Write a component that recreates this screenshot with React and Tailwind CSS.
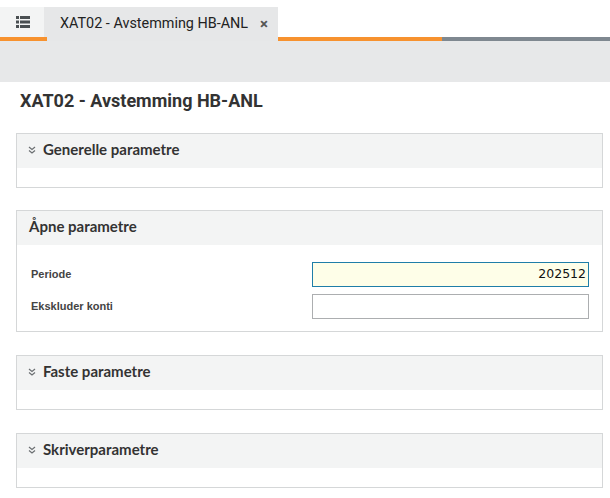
import React from "react";

function Chevrons() {
  return (
    <svg width="8" height="8" viewBox="0 0 8 8" className="shrink-0" fill="none" stroke="#6b6f72" strokeWidth="1.2">
      <path d="M1 1 L4 3.5 L7 1" />
      <path d="M1 4.5 L4 7 L7 4.5" />
    </svg>
  );
}

function Section({ title, chevron = true, children, bodyClass = "h-[19px]", className = "" }) {
  return (
    <div className={"ml-4 mr-[7px] border border-[#d5d7d8] bg-white " + className}>
      <div className="flex h-[34px] items-center gap-[7px] bg-[#f3f4f4] pb-[3px] pl-[11px] text-[15px] font-bold text-[#333]" style={{ fontFamily: "Lato, sans-serif" }}>
        {chevron && <Chevrons />}
        <span className={chevron ? "" : "pl-[1px]"}>{title}</span>
      </div>
      <div className={bodyClass}>{children}</div>
    </div>
  );
}

export default function App() {
  return (
    <div className="h-[498px] w-[610px] overflow-hidden bg-white" style={{ fontFamily: "Roboto, sans-serif" }}>
      <div className="h-[7px]" />
      <div className="flex h-[34px]">
        <div className="flex w-[47px] flex-col">
          <div className="flex flex-1">
            <div className="flex w-[44px] items-center justify-center bg-[#f3f4f4] pl-[1px]">
              <svg width="14" height="12" viewBox="0 0 14 12" fill="#4a4f52">
                <rect x="0" y="0" width="3" height="3" />
                <rect x="4" y="0" width="10" height="3" />
                <rect x="0" y="4.5" width="3" height="3" />
                <rect x="4" y="4.5" width="10" height="3" />
                <rect x="0" y="9" width="3" height="3" />
                <rect x="4" y="9" width="10" height="3" />
              </svg>
            </div>
            <div className="w-[3px] bg-[#e6e7e8]" />
          </div>
          <div className="h-[4px] bg-[#f7922f]" />
        </div>
        <div className="flex w-[231px] items-center bg-[#e6e7e8] pl-[13px] text-[14.4px] text-[#222]">
          <span>XAT02 - Avstemming HB-ANL</span>
          <span className="ml-[12px] text-[15px] font-bold text-[#555]">×</span>
        </div>
        <div className="flex flex-1 flex-col">
          <div className="flex-1" />
          <div className="flex h-[4px]">
            <div className="w-[164px] bg-[#f7922f]" />
            <div className="flex-1 bg-[#7f8890]" />
          </div>
        </div>
      </div>
      <div className="h-[41px] bg-[#e7e8e9]" />
      <div className="pl-[20px] pt-[9px] text-[18px] font-bold leading-[20px] text-[#333]">XAT02 - Avstemming HB-ANL</div>
      <div className="mt-[22px] flex flex-col">
        <Section title="Generelle parametre" />
        <Section title="Åpne parametre" chevron={false} className="mt-[22px]" bodyClass="pt-[17px] pb-[12px] pr-[13px]">
          <div className="flex flex-col gap-[7px]">
            <div className="flex h-[25px] items-center">
              <div className="w-[295px] pl-[14px] text-[11px] font-bold text-[#444]" style={{ fontFamily: "'Liberation Sans', Arial, sans-serif" }}>Periode</div>
              <div className="flex h-[25px] flex-1 items-center justify-end border border-[#1f7ea8] bg-[#fefee8] pr-[2px] text-[12.5px] text-[#111]" style={{ fontFamily: "'DejaVu Sans', Verdana, sans-serif" }}>202512</div>
            </div>
            <div className="flex h-[25px] items-center">
              <div className="w-[295px] pl-[14px] text-[11px] font-bold text-[#444]" style={{ fontFamily: "'Liberation Sans', Arial, sans-serif" }}>Ekskluder konti</div>
              <div className="h-[25px] flex-1 border border-[#acaeb0] bg-white" />
            </div>
          </div>
        </Section>
        <Section title="Faste parametre" className="mt-[23px]" />
        <Section title="Skriverparametre" className="mt-[23px]" />
      </div>
    </div>
  );
}
